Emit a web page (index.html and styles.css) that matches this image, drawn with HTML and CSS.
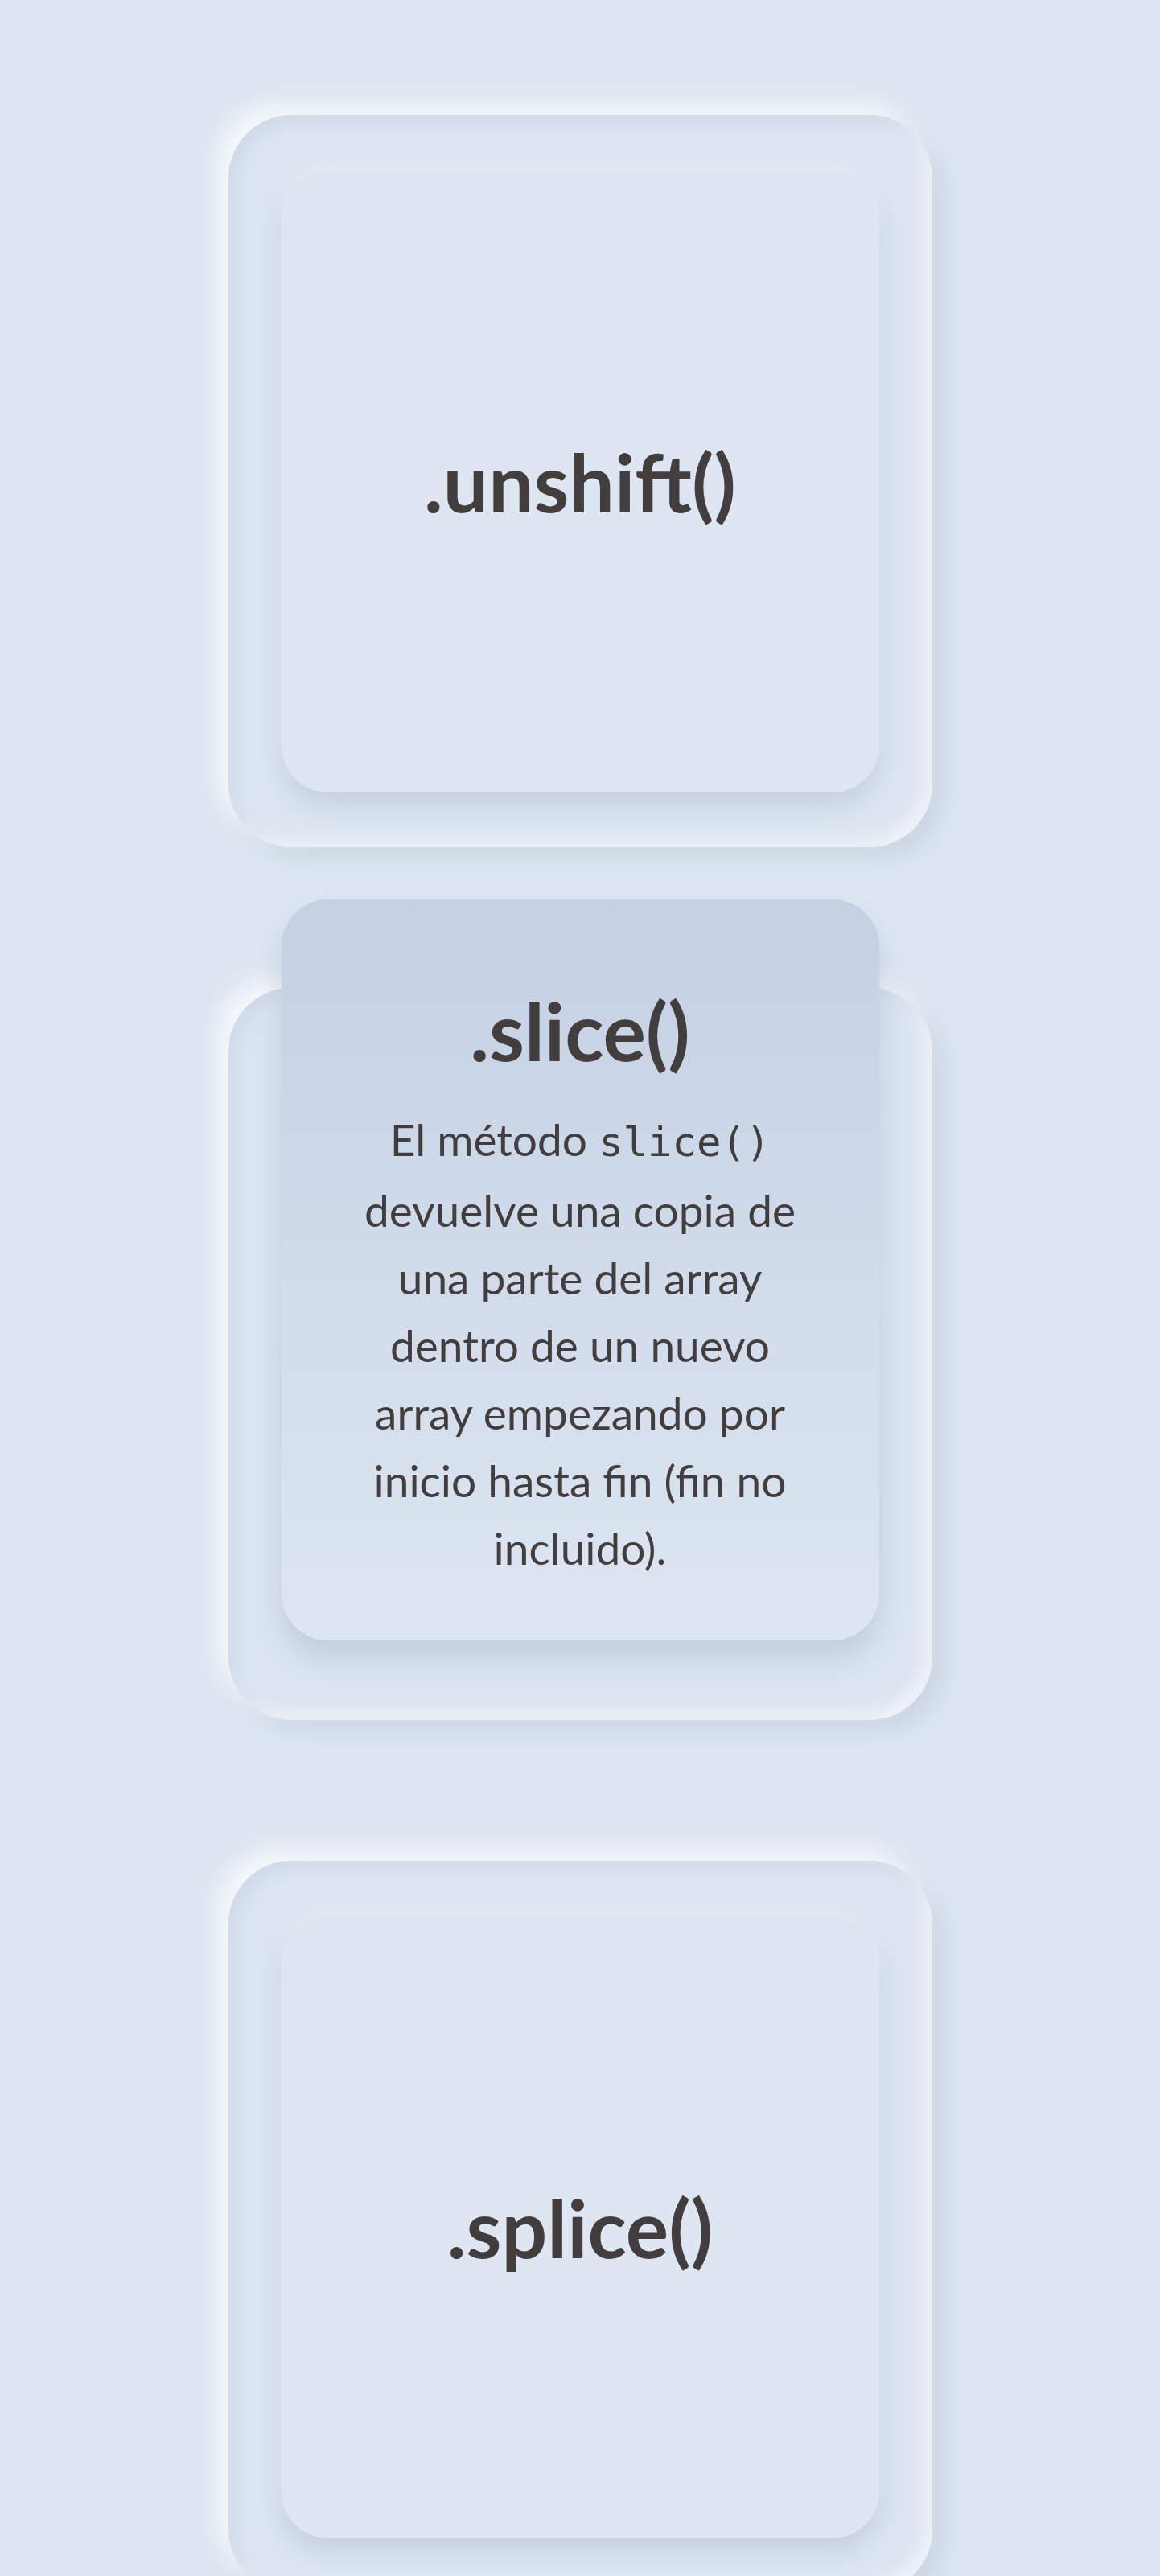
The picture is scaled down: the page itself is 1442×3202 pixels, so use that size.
FILE: index.html
```html
<!DOCTYPE html>
<html lang="es">
<head>
<meta charset="utf-8">
<title>Métodos de array</title>
<link rel="stylesheet" href="styles.css">
</head>
<body>
<main class="list">
  <section class="card">
    <div class="face">
      <h2 class="title">.unshift()</h2>
    </div>
  </section>
  <section class="card">
    <div class="face face--open">
      <h2 class="title">.slice()</h2>
      <p class="desc">El método <code>slice()</code> devuelve una copia de una parte del array dentro de un nuevo array empezando por inicio hasta fin (fin no incluido).</p>
    </div>
  </section>
  <section class="card">
    <div class="face">
      <h2 class="title">.splice()</h2>
    </div>
  </section>
</main>
</body>
</html>
```
FILE: styles.css
```css
html, body {
  margin: 0;
  background: #dde6f1;
}

body {
  font-family: Lato, "Open Sans", sans-serif;
  color: #433e3e;
}

.list {
  display: flex;
  flex-direction: column;
  align-items: center;
  gap: 175px;
  padding: 143px 0 120px;
}

.card {
  box-sizing: border-box;
  width: 875px;
  height: 910px;
  padding: 68px 66px;
  border-radius: 78px;
  background: #dce5f1;
  box-shadow:
    -14px -14px 28px rgba(255, 255, 255, 0.75),
    14px 14px 28px rgba(170, 184, 204, 0.35),
    inset 10px 10px 18px rgba(170, 184, 204, 0.22),
    inset -10px -10px 18px rgba(255, 255, 255, 0.55);
}

.face {
  box-sizing: border-box;
  height: 774px;
  border-radius: 58px;
  background: #dde6f1;
  display: flex;
  flex-direction: column;
  align-items: center;
  justify-content: center;
  box-shadow:
    0 16px 30px rgba(160, 176, 198, 0.4),
    0 -6px 16px rgba(255, 255, 255, 0.35);
}

.face--open {
  height: auto;
  min-height: 774px;
  justify-content: flex-start;
  padding: 102px 70px 73px;
  background: linear-gradient(180deg, #c4d1e3 0%, #d2dceb 55%, #dde6f1 100%);
  transform: translateY(-178px);
  box-shadow:
    0 22px 36px rgba(160, 176, 198, 0.45);
}

.title {
  margin: 0;
  font-size: 100px;
  font-weight: 700;
  line-height: 1.2;
  letter-spacing: 0;
  color: #433e3e;
}

.desc {
  margin: 34px 0 0;
  font-size: 55px;
  line-height: 84px;
  text-align: center;
  color: #433e3e;
}

.desc code {
  font-family: "DejaVu Sans Mono", "Liberation Mono", monospace;
  font-size: 0.92em;
}
```
